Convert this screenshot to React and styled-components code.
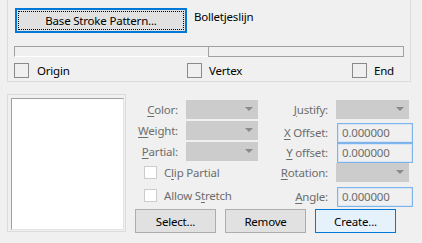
import React from "react";
import styled, { createGlobalStyle } from "styled-components";

const Global = createGlobalStyle`
  html, body { margin: 0; padding: 0; background: #f0f0f0; }
`;

const Root = styled.div`
  width: 422px;
  height: 243px;
  overflow: hidden;
  background: #f0f0f0;
  font-family: "Noto Sans", "Liberation Sans", sans-serif;
  font-size: 11.5px;
  letter-spacing: -0.2px;
  color: #000;
  box-sizing: border-box;
  * { box-sizing: border-box; }
`;

const TopGroup = styled.div`
  margin-left: 7px;
  width: 404px;
  height: 82px;
  border: 1px solid #dcdcdc;
  border-top: none;
  padding: 8px 0 0 7px;
  display: flex;
  flex-direction: column;
`;

const PatternRow = styled.div`
  display: flex;
  align-items: flex-start;
`;

const PatternButton = styled.button`
  position: relative;
  width: 172px;
  height: 25px;
  margin: 0;
  padding: 0;
  border: 2px solid #0078d7;
  background: #e1e1e1;
  font: inherit;
  letter-spacing: inherit;
  color: #000;
  &::after {
    content: "";
    position: absolute;
    inset: 1px;
    border: 1px dotted #000;
  }
`;

const PatternName = styled.span`
  margin-left: 7px;
  margin-top: 1px;
  line-height: 16px;
`;

const StrokeBar = styled.div`
  margin-top: 13px;
  margin-left: -1px;
  width: 390px;
  height: 11px;
  display: flex;
`;

const StrokeLeft = styled.div`
  width: 194px;
  border-top: 1px solid #a0a0a0;
  border-left: 1px solid #a0a0a0;
  border-bottom: 1px solid #ffffff;
`;

const StrokeRight = styled.div`
  flex: 1;
  border: 1px solid #a0a0a0;
`;

const PointRow = styled.div`
  display: grid;
  grid-template-columns: 173px 165px auto;
  margin-top: 6px;
  margin-left: -1px;
`;

const CheckItem = styled.label`
  display: flex;
  align-items: center;
  gap: ${(p) => p.$gap}px;
  height: ${(p) => p.$h}px;
  padding-left: ${(p) => p.$indent || 0}px;
  color: ${(p) => (p.$disabled ? "#6d6d6d" : "#000")};
  line-height: 16px;
`;

const Box = styled.span`
  display: inline-block;
  flex: none;
  width: ${(p) => p.$size}px;
  height: ${(p) => p.$size}px;
  border: 1px solid ${(p) => (p.$disabled ? "#cccccc" : "#8a8a8a")};
  background: ${(p) => (p.$disabled ? "#ffffff" : "transparent")};
`;

const Bottom = styled.div`
  display: flex;
  margin-top: 12px;
  padding-left: 7px;
`;

const Preview = styled.div`
  width: 119px;
  height: 138px;
  border: 1px solid #dcdcdc;
  padding: 3px 1px 1px 3px;
  display: flex;
`;

const PreviewInner = styled.div`
  flex: 1;
  background: #ffffff;
  border-left: 1px solid #a0a0a0;
  border-top: 1px solid #a0a0a0;
  border-right: 1px solid #e3e3e3;
  border-bottom: 1px solid #e3e3e3;
`;

const Controls = styled.div`
  margin-left: 9px;
  padding-top: 6px;
  display: flex;
  flex-direction: column;
`;

const Fields = styled.div`
  display: flex;
`;

const Column = styled.div`
  width: ${(p) => p.$w}px;
  display: flex;
  flex-direction: column;
`;

const FieldRow = styled.div`
  display: flex;
  align-items: center;
  height: ${(p) => p.$h}px;
  margin-top: ${(p) => p.$mt || 0}px;
`;

const Label = styled.span`
  width: ${(p) => p.$w}px;
  padding-right: 8px;
  text-align: right;
  color: #6d6d6d;
  white-space: nowrap;
  line-height: 16px;
`;

const Key = styled.u`
  text-decoration: underline;
  text-underline-offset: 2px;
`;

const Dropdown = styled.div`
  position: relative;
  width: ${(p) => p.$w}px;
  height: 19px;
  background: #cccccc;
  &::after {
    content: "";
    position: absolute;
    right: 5px;
    top: 7px;
    border-left: 4px solid transparent;
    border-right: 4px solid transparent;
    border-top: 4px solid #8a8a8a;
  }
`;

const Input = styled.div`
  width: 76px;
  height: 20px;
  margin-left: 1px;
  border: 1px solid #7eb4ea;
  box-shadow: inset 0 0 0 1px #d6e6f6;
  background: #f0f0f0;
  padding-left: 4px;
  color: #6d6d6d;
  line-height: 17px;
`;

const ButtonRow = styled.div`
  display: flex;
  gap: 9px;
  margin-top: 2px;
`;

const PushButton = styled.button`
  width: 81px;
  height: 24px;
  margin: 0;
  padding: 0;
  font: inherit;
  letter-spacing: inherit;
  color: #000;
  background: ${(p) => (p.$default ? "#e5f1fb" : "#e1e1e1")};
  border: 1px solid ${(p) => (p.$default ? "#0078d7" : "#adadad")};
`;

export default function App() {
  return (
    <Root>
      <Global />
      <TopGroup>
        <PatternRow>
          <PatternButton>Base Stroke Pattern...</PatternButton>
          <PatternName>Bolletjeslijn</PatternName>
        </PatternRow>
        <StrokeBar>
          <StrokeLeft />
          <StrokeRight />
        </StrokeBar>
        <PointRow>
          <CheckItem $gap={8} $h={15}>
            <Box $size={15} />
            Origin
          </CheckItem>
          <CheckItem $gap={7} $h={15}>
            <Box $size={15} />
            Vertex
          </CheckItem>
          <CheckItem $gap={7} $h={15}>
            <Box $size={15} />
            End
          </CheckItem>
        </PointRow>
      </TopGroup>
      <Bottom>
        <Preview>
          <PreviewInner />
        </Preview>
        <Controls>
          <Fields>
            <Column $w={123}>
              <FieldRow $h={19}>
                <Label $w={51}><Key>C</Key>olor:</Label>
                <Dropdown $w={72} />
              </FieldRow>
              <FieldRow $h={19} $mt={2}>
                <Label $w={51}><Key>W</Key>eight:</Label>
                <Dropdown $w={72} />
              </FieldRow>
              <FieldRow $h={19} $mt={2}>
                <Label $w={51}><Key>P</Key>artial:</Label>
                <Dropdown $w={72} />
              </FieldRow>
              <CheckItem $gap={7} $h={23} $indent={9} $disabled>
                <Box $size={13} $disabled />
                <span>C<Key>l</Key>ip Partial</span>
              </CheckItem>
              <CheckItem $gap={7} $h={23} $indent={9} $disabled>
                <Box $size={13} $disabled />
                <span>Allow S<Key>t</Key>retch</span>
              </CheckItem>
            </Column>
            <Column $w={155}>
              <FieldRow $h={19}>
                <Label $w={78}><Key>J</Key>ustify:</Label>
                <Dropdown $w={73} />
              </FieldRow>
              <FieldRow $h={20} $mt={4}>
                <Label $w={78}><Key>X</Key> Offset:</Label>
                <Input>0.000000</Input>
              </FieldRow>
              <FieldRow $h={20}>
                <Label $w={78}><Key>Y</Key> offset:</Label>
                <Input>0.000000</Input>
              </FieldRow>
              <FieldRow $h={19}>
                <Label $w={78}><Key>R</Key>otation:</Label>
                <Dropdown $w={73} />
              </FieldRow>
              <FieldRow $h={20} $mt={5}>
                <Label $w={78}><Key>A</Key>ngle:</Label>
                <Input>0.000000</Input>
              </FieldRow>
            </Column>
          </Fields>
          <ButtonRow>
            <PushButton>Select...</PushButton>
            <PushButton>Remove</PushButton>
            <PushButton $default>Create...</PushButton>
          </ButtonRow>
        </Controls>
      </Bottom>
    </Root>
  );
}
